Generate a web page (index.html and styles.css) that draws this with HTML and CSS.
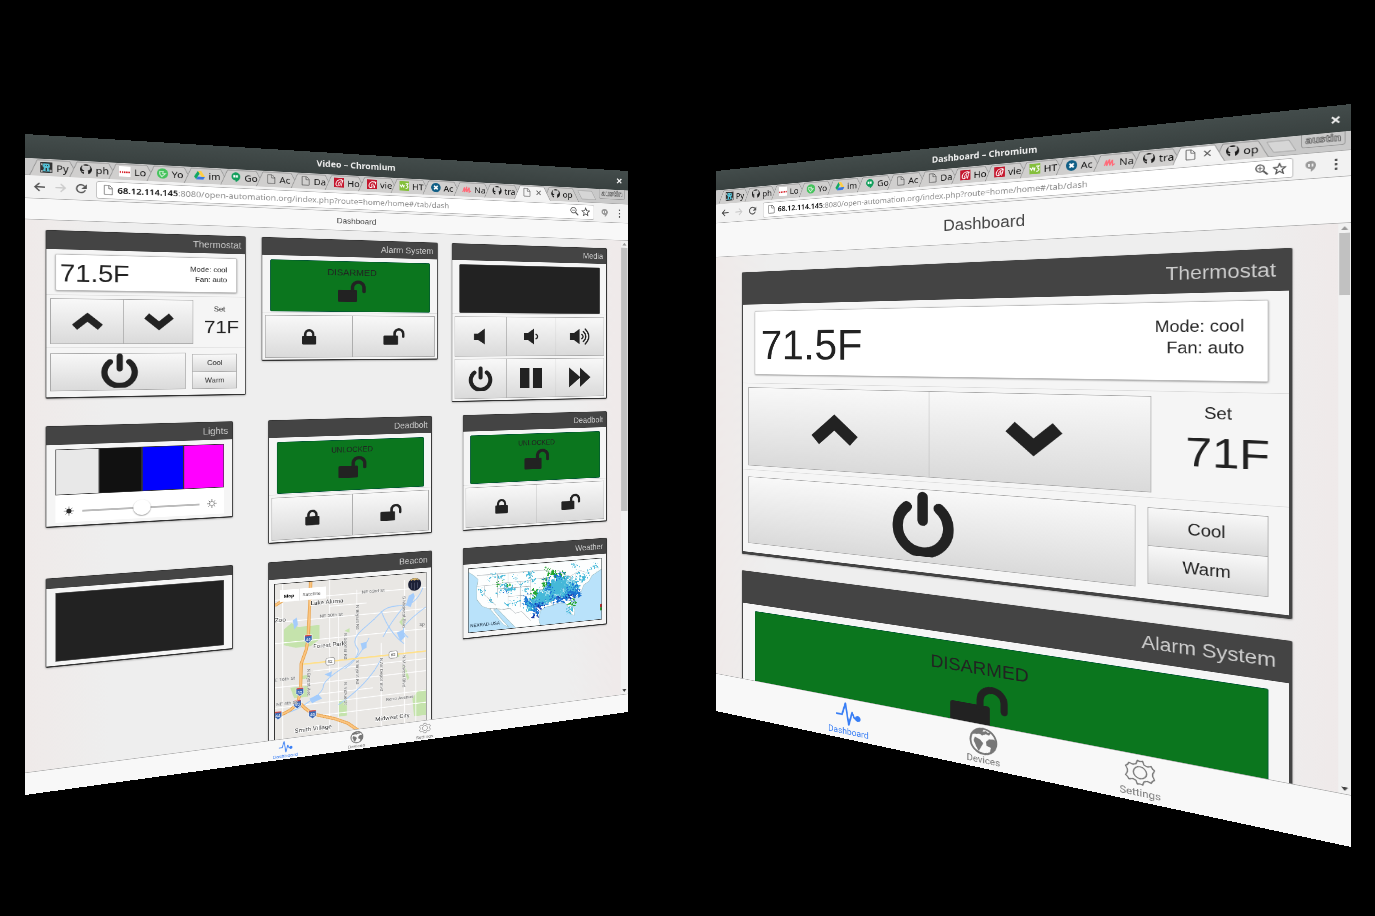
FILE: index.html
```html
<!DOCTYPE html>
<html lang="en">
<head>
<meta charset="utf-8">
<title>Open Automation</title>
<link rel="stylesheet" href="styles.css">
</head>
<body>
<svg class="defs" aria-hidden="true">
  <symbol id="up" viewBox="0 0 88 56"><path d="M9 46 44 15l35 31" fill="none" stroke="currentColor" stroke-width="21" stroke-linejoin="miter"/></symbol>
  <symbol id="down" viewBox="0 0 88 56"><path d="M9 10 44 41l35-31" fill="none" stroke="currentColor" stroke-width="21" stroke-linejoin="miter"/></symbol>
  <symbol id="power" viewBox="0 0 100 106"><path d="M24 27a41 41 0 1 0 52 0M50 10v38" fill="none" stroke="currentColor" stroke-width="17" stroke-linecap="round"/></symbol>
  <symbol id="lock" viewBox="0 0 46 54"><rect y="24" width="46" height="30" rx="3"/><path d="M10 28V18a13 13 0 0 1 26 0v10" fill="none" stroke="currentColor" stroke-width="8"/></symbol>
  <symbol id="unlock" viewBox="0 0 90 72"><rect y="32" width="62" height="40" rx="4"/><path d="M47 34V24a18 18 0 0 1 37 0v13" fill="none" stroke="currentColor" stroke-width="11" stroke-linecap="round"/></symbol>
  <symbol id="vol0" viewBox="0 0 50 60"><path d="M2 20h14L40 2v56L16 42H2z"/></symbol>
  <symbol id="vol1" viewBox="0 0 56 60"><path d="M2 18h14L38 2v56L16 42H2z"/><path d="M46 22q12 8 0 16" fill="none" stroke="currentColor" stroke-width="5" stroke-linecap="round"/></symbol>
  <symbol id="vol3" viewBox="0 0 78 60"><path d="M2 18h14L38 2v56L16 42H2z"/><path d="M46 22q10 8 0 16M52 12q19 18 0 36M59 3q27 27 0 54" fill="none" stroke="currentColor" stroke-width="5" stroke-linecap="round"/></symbol>
  <symbol id="pause" viewBox="0 0 84 72"><path d="M2 0h34v72H2zM48 0h34v72H48z"/></symbol>
  <symbol id="ffwd" viewBox="0 0 80 72"><path d="M2 2 40 34V2l38 34-38 34V38L2 70z"/></symbol>
  <symbol id="pulse" viewBox="0 0 44 44"><path d="M1 24h10L17 4l6 36 6-22 4 9h6" fill="none" stroke="currentColor" stroke-width="3" stroke-linejoin="round" stroke-linecap="round"/><circle cx="39" cy="27" r="5"/></symbol>
  <symbol id="earth" viewBox="0 0 44 44"><circle cx="22" cy="22" r="20" fill="none" stroke="currentColor" stroke-width="3"/><path d="M5 13 9 7l6-4 8-1-2 5 5-2 3 2 5-1-3 5-5-1-6 3-3-2-5 1zM9 17l8 3 5 5-3 6-4 8-4-7-4-9zM31 17l8-1 4 7-2 9-7 8-2-2 2-8-7-2-1-6z"/></symbol>
  <symbol id="gear" viewBox="-3 -3 50 50"><g fill="none" stroke="currentColor" stroke-width="2" stroke-linejoin="round"><circle cx="22" cy="22" r="10"/><path d="M18 2q4 2 8 0l2 6 5 2 6-2q1 4 5 6l-3 6v4l3 6q-4 2-5 6l-6-2-5 2-2 6q-4-2-8 0l-2-6-5-2-6 2q-1-4-5-6l3-6v-4l-3-6q4-2 5-6l6 2 5-2z"/></g></symbol>
  <symbol id="back" viewBox="0 0 16 16"><path d="M15 8H2M8 2 2 8l6 6" fill="none" stroke="currentColor" stroke-width="2"/></symbol>
  <symbol id="fwd" viewBox="0 0 16 16"><path d="M1 8h13M8 2l6 6-6 6" fill="none" stroke="currentColor" stroke-width="2"/></symbol>
  <symbol id="reload" viewBox="0 0 16 16"><path d="M13 10a6 6 0 1 1-1-6" fill="none" stroke="currentColor" stroke-width="2"/><path d="M15 1v7H8z"/></symbol>
  <symbol id="doc" viewBox="0 0 16 16"><path d="M3 1h7l4 4v10H3zM9 1v5h5" fill="none" stroke="#555"/></symbol>
  <symbol id="find" viewBox="0 0 16 16"><g fill="none" stroke="currentColor"><circle cx="6" cy="6" r="5" stroke-width="1.6"/><path d="m10 10 5 5" stroke-width="2.4"/><path d="M3 6h6"/></g></symbol>
  <symbol id="findplus" viewBox="0 0 16 16"><g fill="none" stroke="currentColor"><circle cx="6" cy="6" r="5" stroke-width="1.6"/><path d="m10 10 5 5" stroke-width="2.4"/><path d="M3 6h6M6 3v6"/></g></symbol>
  <symbol id="star" viewBox="0 0 16 16"><path d="m8 1 2 5 5 .3-4 3.400 1.300 5.300L8 12l-4.300 3L5 9.700 1 6.300 6 6z" fill="none" stroke="currentColor" stroke-width="1.500"/></symbol>
  <symbol id="hang" viewBox="0 0 16 16"><path d="M8 1a6 5.500 0 0 0 0 11v4q6-4 6-9a6 6 0 0 0-6-6z" fill="#999"/><path d="M5 5h2v4H5zM9 5h2v4H9z" fill="#eee"/></symbol>
  <symbol id="dots" viewBox="0 0 16 16"><path d="M7 1h3v3H7zM7 7h3v3H7zM7 13h3v3H7z"/></symbol>
  <symbol id="fpy" viewBox="0 0 16 16"><path fill="#333" d="M0 0h16v16H0z"/><path fill="#54c1d6" d="M4 2h8l1 5-2 2 2 5H3l2-5-2-3z"/><path fill="#333" d="M6 4h1v2H6zM9 4h1v2H9zM7 9h2v4H7z"/><path fill="#aaa" d="M1 12h2v3H1zM13 11h2v4h-2zM1 2h2v3H1z"/></symbol>
  <symbol id="fgh" viewBox="0 0 16 16"><path fill="#1b1b1b" d="M5 15v-3c-2 .5-3-.5-3.500-2 1 0 1.500 1.400 3.500 1 0-1 .3-1.300.6-1.600C2 9 1.600 4.600 3.100 3.300 2.700 2 3 1.200 3.200 1c1.200 0 2 .8 2.300 1h5c.4-.3 1.200-1 2.300-1 .2.300.5 1 .1 2.300 1.500 1.300 1.100 5.700-2.500 6.100.4.400.6 1 .6 2V15c3-1 5-4 5-7 0-4-3-8-8-8S0 4 0 8c0 3 2 6 5 7z"/><path fill="#c9c9c9" d="M4 4.500q4-1 8 0c1 3-.5 4-4 4s-5-1-4-4z"/></symbol>
  <symbol id="fcanon" viewBox="0 0 16 16"><path fill="#fff" d="M0 0h16v16H0z"/><path stroke="#d4141c" stroke-width="2.500" stroke-dasharray="2 1" d="M1 9h14"/></symbol>
  <symbol id="fgreen" viewBox="0 0 16 16"><circle cx="8" cy="8" r="8" fill="#45c35c"/><path fill="none" stroke="#cfeed4" stroke-width="1.500" d="M4 5h5l-1 3h4l-5 5-3-4z"/></symbol>
  <symbol id="fdrive" viewBox="0 0 16 16"><path fill="#ffcf44" d="M5.500 1h5l5.500 9h-5z"/><path fill="#11a861" d="m5.500 1 2.500 4.500L3 14 0 10z"/><path fill="#3777e3" d="M5.500 10H16l-2.500 4.500H3z"/></symbol>
  <symbol id="fhang" viewBox="0 0 16 16"><path d="M8 0a7 6.800 0 0 0 0 13.500V16q7-4 7-9.300A7 7 0 0 0 8 0z" fill="#119e5b"/><path d="M4.500 4.500h3v4h-3zM8.500 4.500h3v4h-3z" fill="#fff"/></symbol>
  <symbol id="fred" viewBox="0 0 16 16"><path fill="#c4162d" d="M0 0h16v16H0z"/><path fill="none" stroke="#fff" stroke-width="1.300" d="M13 3C7 2 3 6 3 11s8 2 7-2-4 0-3 3M9 6l5-2-3 10"/></symbol>
  <symbol id="fw3" viewBox="0 0 16 16"><path fill="#84bf3b" d="M0 0h16v16H0z"/><path fill="none" stroke="#fff" stroke-width="1.500" d="m1 6 2 4 2-4 2 4 1-4M10 4h4l-2 3q4 2 0 5h-2"/></symbol>
  <symbol id="fblue" viewBox="0 0 16 16"><circle cx="8" cy="8" r="8" fill="#0f5e85"/><path stroke="#fff" stroke-width="2.500" d="m5 5 6 6M11 5l-6 6"/></symbol>
  <symbol id="fpink" viewBox="0 0 16 16"><path fill="none" stroke="#ff6c7a" stroke-width="2" d="m1 13 3-8v8l4-9v9l4-8v8l3-2"/></symbol>
</svg>

<main class="stage">
  <section class="window window-left" aria-label="Video window">
    <div class="titlebar"><span>Video – Chromium</span><button class="close" aria-label="Close">×</button></div>
    <div class="tabs"></div>
    <div class="toolbar">
      <button aria-label="Back"><svg><use href="#back"/></svg></button>
      <button aria-label="Forward" class="off"><svg><use href="#fwd"/></svg></button>
      <button aria-label="Reload"><svg><use href="#reload"/></svg></button>
      <div class="url"><svg><use href="#doc"/></svg><p><b>68.12.114.145</b>:8080/open-automation.org/index.php?route=home/home#/tab/dash</p><svg><use href="#find"/></svg><svg><use href="#star"/></svg></div>
      <svg><use href="#hang"/></svg>
      <button aria-label="Menu"><svg><use href="#dots"/></svg></button>
    </div>
    <div class="page small">
      <h1>Dashboard</h1>
      <div class="view">
        <div class="content">
          <div class="row">
            <article class="card">
              <h2>Thermostat</h2>
              <div class="sect"><div class="display"><strong>71.5F</strong><p>Mode: cool<br>Fan: auto</p></div></div>
              <div class="sect set-row">
                <div class="keys"><button aria-label="Warmer"><svg class="chev"><use href="#up"/></svg></button><button aria-label="Cooler"><svg class="chev"><use href="#down"/></svg></button></div>
                <div class="set"><span>Set</span><strong>71F</strong></div>
              </div>
              <div class="sect power-row">
                <div class="keys"><button aria-label="Power"><svg class="pwr"><use href="#power"/></svg></button></div>
                <div class="modes"><button>Cool</button><button>Warm</button></div>
              </div>
            </article>
            <article class="card">
              <h2>Alarm System</h2>
              <div class="sect flat"><div class="state">DISARMED<svg><use href="#unlock"/></svg></div></div>
              <div class="keys tail"><button aria-label="Arm"><svg class="lk"><use href="#lock"/></svg></button><button aria-label="Disarm"><svg class="ulk"><use href="#unlock"/></svg></button></div>
            </article>
            <article class="card">
              <h2>Media</h2>
              <div class="sect flat"><div class="state dark"></div></div>
              <div class="keys tail"><button aria-label="Mute"><svg class="v0"><use href="#vol0"/></svg></button><button aria-label="Volume down"><svg class="v1"><use href="#vol1"/></svg></button><button aria-label="Volume up"><svg class="v3"><use href="#vol3"/></svg></button></div>
              <div class="keys tail"><button aria-label="Power"><svg class="mid"><use href="#power"/></svg></button><button aria-label="Pause"><svg class="med"><use href="#pause"/></svg></button><button aria-label="Forward"><svg class="med"><use href="#ffwd"/></svg></button></div>
            </article>
          </div>
          <div class="row wide">
            <article class="card">
              <h2>Lights</h2>
              <div class="lights">
                <div class="swatches"><button class="c1" aria-label="White"></button><button class="c2" aria-label="Black"></button><button class="c3" aria-label="Blue"></button><button class="c4" aria-label="Magenta"></button></div>
                <label class="dim"><svg viewBox="0 0 16 16"><circle cx="8" cy="8" r="3.500"/><path d="M8 1v14M1 8h14M3 3l10 10M13 3 3 13" stroke="#333" stroke-width=".6"/></svg><input type="range" aria-label="Brightness"><svg viewBox="0 0 16 16"><path d="M8 1v14M1 8h14M3 3l10 10M13 3 3 13" stroke="#777"/><circle cx="8" cy="8" r="3.500" fill="#fff" stroke="#777"/></svg></label>
              </div>
            </article>
            <article class="card">
              <h2>Deadbolt</h2>
              <div class="sect flat"><div class="state lesser">UNLOCKED<svg><use href="#unlock"/></svg></div></div>
              <div class="keys tail"><button aria-label="Lock"><svg class="lk"><use href="#lock"/></svg></button><button aria-label="Unlock"><svg class="ulk"><use href="#unlock"/></svg></button></div>
            </article>
            <article class="card">
              <h2>Deadbolt</h2>
              <div class="sect flat"><div class="state lesser">UNLOCKED<svg><use href="#unlock"/></svg></div></div>
              <div class="keys tail"><button aria-label="Lock"><svg class="lk"><use href="#lock"/></svg></button><button aria-label="Unlock"><svg class="ulk"><use href="#unlock"/></svg></button></div>
            </article>
          </div>
          <div class="row wide">
            <article class="card"><h2 class="blank"></h2><div class="blackbox"></div></article>
            <article class="card">
              <h2>Beacon</h2>
              <div class="map">
                <svg viewBox="0 0 245 290" class="citymap">
                  <rect width="245" height="290" fill="#e9e7e4"/>
                  <path fill="#c5e3ac" d="M14 76l12-10 10 8h34v24l-14 10H32l-18-6zM24 174h28v18H30zM101 204h13v28h-13zM222 216l10-12h13v44h-20zM42 156h10v6H42zM200 82l7-8 4 10-5 6zM195 136h5v6h-5zM205 158h4l8 22-3 4zM110 88l8-4v8z"/>
                  <g stroke="#fff" stroke-width="1.500" fill="none"><path d="M12 0v290M86 0v290M100 60v230M130 20v270M170 115v175M209 10v280M228 40v250M0 26h245M0 63h245M0 98h245M0 171h245M0 205h245M52 226h193M60 150h185M86 44h60M66 190h90"/></g>
                  <path fill="none" stroke="#a4ccfb" stroke-width="1.500" d="M240 26q-12 30-36 28t-34 8-30 26-10 30-22 32-32 28-28 26-48 10M209 55q-22 24-36 50M245 60q-30 20-36 30t6 20M110 152q20-10 40-48M100 212q50-30 70-70M170 60q14 40 38 60"/>
                  <path fill="#a4ccfb" d="M211 54l5-16 8-4 2 6-7 18zM136 112l10-2v10l-7 4zM28 62l6-4 2 12-6 8zM54 196l14-6 6 8-16 6zM78 158l12-4-2 10zM196 100l10-4 4 12-8 8z"/>
                  <path fill="none" stroke="#ffe08a" stroke-width="2.500" d="M44 137h201"/>
                  <g fill="none" stroke-linejoin="round"><path stroke="#e59c42" stroke-width="5" d="M56 0 52 95l-3 18-8 23-1 46-4 16 11 13 12 11 36 13 20 10 24 20M36 198q-10 18-36 20M0 35q26-18 56-14"/><path stroke="#fbc580" stroke-width="3" d="M56 0 52 95l-3 18-8 23-1 46-4 16 11 13 12 11 36 13 20 10 24 20M36 198q-10 18-36 20M0 35q26-18 56-14"/></g>
                  <g fill="#3b68b5" stroke="#fff"><path d="M46 89h12v9l-6 5-6-5zM33 176h12v9l-6 5-6-5zM29 196h12v9l-6 5-6-5zM0 211h11v9l-6 5-5-5zM53 216h12v9l-6 5-6-5z"/></g>
                  <path stroke="#d64b43" stroke-width="2" d="M47 90h10M34 177h10M30 197h10M0 212h10M54 217h10"/>
                  <g fill="#fff" stroke="#888"><rect x="80" y="131" width="14" height="12" rx="3"/><rect x="183" y="131" width="14" height="12" rx="3"/></g>
                  <g class="tiny" fill="#333"><text x="83" y="140">62</text><text x="186" y="140">62</text></g>
                  <g class="tiny" fill="#fff"><text x="48" y="99">44</text><text x="35" y="186">35</text><text x="31" y="206">40</text><text x="1" y="221">44</text><text x="55" y="226">40</text></g>
                  <g class="town"><text x="56" y="39">Lake Aluma</text><text x="0" y="63">Zoo</text><text x="60" y="112">Forest Park</text><text x="160" y="248">Midwest City</text><text x="31" y="250">Smith Village</text></g>
                  <g class="street"><text x="138" y="27">NE 63rd St</text><text x="70" y="62">NE 50th St</text><text x="0" y="161">E 16th St</text><text x="2" y="201">NE 4th St</text><text x="178" y="216">Reno Avenue</text><text x="234" y="92">Sp</text>
                    <text transform="translate(129 46) rotate(90)">N Bryant Rd</text><text transform="translate(109 92) rotate(90)">N Sooner Rd</text><text transform="translate(206 38) rotate(90)">S Midwest Blvd</text><text transform="translate(129 140) rotate(90)">S Bryant Rd</text><text transform="translate(168 140) rotate(90)">N Air Depot Blvd</text><text transform="translate(206 140) rotate(90)">N Midwest Blvd</text><text transform="translate(51 145) rotate(90)">N Bryant Ave</text><text transform="translate(109 175) rotate(90)">N Vickie Dr</text></g>
                  <rect x="8" y="10" width="72" height="20" fill="#fff"/><path d="M38 10v20" stroke="#ddd"/>
                  <text x="14" y="23" class="maptype b">Map</text><text x="43" y="23" class="maptype">Satellite</text>
                  <circle cx="226" cy="19" r="11" fill="#1b2035"/><path fill="#d9b66a" d="M219 11q7-6 14 0l-1 2-3-2-3 2-3-2-3 2z"/><path stroke="#6d7288" d="M221 16v10M226 16v13M231 16v10"/>
                </svg>
              </div>
            </article>
            <article class="card short">
              <h2>Weather</h2>
              <div class="map">
                <svg viewBox="0 0 244 112" class="usmap">
                  <filter id="rough" x="-10%" y="-10%" width="120%" height="120%" color-interpolation-filters="sRGB"><feTurbulence type="fractalNoise" baseFrequency=".22" numOctaves="2" seed="8"/><feDisplacementMap in="SourceGraphic" scale="26" xChannelSelector="R" yChannelSelector="G"/></filter>
                  <rect width="244" height="112" fill="#b9e2fa"/>
                  <path fill="#fdfefe" stroke="#8aa" stroke-width=".6" d="M0 0h244v20l-18 10-6 10-10 6-5 12-14 12-4 8 6 12-1 10-5-2-6-14-6-8-14-1-8 3-14 2-10 6-3 16 3 10H84L66 92 50 74l-6 2 16 20 12 14-10-6-18-22-6-8-14-6-9-12-1-20 3-16-8-8-9-6z"/>
                  <path fill="none" stroke="#8b9499" stroke-width=".6" d="M15 13h122l10 5 16-2 8 8 14 4 18-9 10 4M37 73l26 4 10-1 10 10 12-2 16 18M15 32h36M51 13v42M51 40h60M28 32v16l20 20M70 13v62M70 55h50M92 30v46M51 30h60M111 13v56M111 28h24M111 48h30M120 70h22M135 25v50M150 40v35M160 44v30M171 48v25M120 58h66M150 48h50M185 28v20M195 25v20"/>
                  <g filter="url(#rough)">
                    <g fill="#45b8d8"><ellipse cx="170" cy="48" rx="30" ry="20"/><ellipse cx="138" cy="60" rx="22" ry="12"/><ellipse cx="112" cy="74" rx="12" ry="10"/><circle cx="64" cy="36" r="4"/><circle cx="76" cy="42" r="5"/><circle cx="56" cy="46" r="3"/><circle cx="44" cy="16" r="3"/><circle cx="58" cy="18" r="3"/><circle cx="84" cy="22" r="2"/><circle cx="84" cy="66" r="4"/><circle cx="72" cy="68" r="3"/><circle cx="40" cy="60" r="3"/><circle cx="108" cy="18" r="4"/><circle cx="114" cy="28" r="4"/><circle cx="104" cy="44" r="4"/><circle cx="208" cy="34" r="6"/><circle cx="218" cy="24" r="3"/><circle cx="232" cy="14" r="4"/><circle cx="198" cy="22" r="3"/><circle cx="183" cy="90" r="5"/><circle cx="24" cy="42" r="3"/><circle cx="34" cy="24" r="2"/><circle cx="96" cy="34" r="3"/><circle cx="192" cy="8" r="3"/></g>
                    <g fill="#a9e0ee"><ellipse cx="182" cy="38" rx="8" ry="4"/><ellipse cx="140" cy="54" rx="7" ry="3"/><ellipse cx="160" cy="62" rx="7" ry="3"/><circle cx="174" cy="54" r="4"/></g>
                    <g fill="#1b74d4"><ellipse cx="126" cy="75" rx="14" ry="5"/><ellipse cx="120" cy="88" rx="5" ry="9"/><ellipse cx="166" cy="68" rx="20" ry="5"/><ellipse cx="192" cy="60" rx="12" ry="7"/><ellipse cx="142" cy="38" rx="5" ry="13"/><ellipse cx="162" cy="26" rx="10" ry="5"/><ellipse cx="104" cy="66" rx="4" ry="9"/><circle cx="66" cy="44" r="3"/><circle cx="192" cy="46" r="4"/><circle cx="178" cy="52" r="3"/><circle cx="150" cy="52" r="3"/></g>
                    <g fill="#17309f"><ellipse cx="128" cy="78" rx="7" ry="3"/><ellipse cx="186" cy="65" rx="8" ry="3"/><circle cx="119" cy="93" r="3"/><circle cx="164" cy="66" r="3"/></g>
                    <g fill="#21a52b"><ellipse cx="152" cy="21" rx="8" ry="5"/><ellipse cx="138" cy="38" rx="4" ry="7"/><ellipse cx="120" cy="54" rx="3" ry="8"/><circle cx="52" cy="30" r="3"/><circle cx="70" cy="34" r="3"/><circle cx="190" cy="77" r="5"/><circle cx="170" cy="24" r="3"/><circle cx="142" cy="10" r="3"/></g>
                  </g>
                  <path fill="#c02b2b" d="M241 84h3v6h-3z"/><path fill="#2a9b30" d="M241 90h3v6h-3z"/>
                  <text x="3" y="103" class="stamp">NEXRAD-USA</text>
                </svg>
              </div>
            </article>
          </div>
        </div>
        <div class="scroll"><i></i><span></span><i class="dn"></i></div>
      </div>
      <nav><a href="#dash" class="on"><svg><use href="#pulse"/></svg>Dashboard</a><a href="#devices"><svg><use href="#earth"/></svg>Devices</a><a href="#settings"><svg><use href="#gear"/></svg>Settings</a></nav>
    </div>
  </section>

  <section class="window window-right" aria-label="Dashboard window">
    <div class="titlebar"><span>Dashboard – Chromium</span><button class="close" aria-label="Close">×</button></div>
    <div class="tabs"></div>
    <div class="toolbar">
      <button aria-label="Back"><svg><use href="#back"/></svg></button>
      <button aria-label="Forward" class="off"><svg><use href="#fwd"/></svg></button>
      <button aria-label="Reload"><svg><use href="#reload"/></svg></button>
      <div class="url"><svg><use href="#doc"/></svg><p><b>68.12.114.145</b>:8080/open-automation.org/index.php?route=home/home#/tab/dash</p><svg><use href="#findplus"/></svg><svg><use href="#star"/></svg></div>
      <svg><use href="#hang"/></svg>
      <button aria-label="Menu"><svg><use href="#dots"/></svg></button>
    </div>
    <div class="page large">
      <h1>Dashboard</h1>
      <div class="view">
        <div class="content">
          <article class="card">
            <h2>Thermostat</h2>
            <div class="sect"><div class="display"><strong>71.5F</strong><p>Mode: cool<br>Fan: auto</p></div></div>
            <div class="sect set-row">
              <div class="keys"><button aria-label="Warmer"><svg class="chev"><use href="#up"/></svg></button><button aria-label="Cooler"><svg class="chev"><use href="#down"/></svg></button></div>
              <div class="set"><span>Set</span><strong>71F</strong></div>
            </div>
            <div class="sect power-row">
              <div class="keys"><button aria-label="Power"><svg class="pwr"><use href="#power"/></svg></button></div>
              <div class="modes"><button>Cool</button><button>Warm</button></div>
            </div>
          </article>
          <article class="card">
            <h2>Alarm System</h2>
            <div class="sect flat"><div class="state">DISARMED<svg><use href="#unlock"/></svg></div></div>
          </article>
        </div>
        <div class="scroll"><i></i><span></span><i class="dn"></i></div>
      </div>
      <nav><a href="#dash" class="on"><svg><use href="#pulse"/></svg>Dashboard</a><a href="#devices"><svg><use href="#earth"/></svg>Devices</a><a href="#settings"><svg><use href="#gear"/></svg>Settings</a></nav>
    </div>
  </section>
</main>
<script src="tabs.js"></script>
</body>
</html>
```

FILE: styles.css
```css
* { box-sizing: border-box; margin: 0; padding: 0; }
body { background: #000; font-family: "Liberation Sans", Arial, sans-serif; color: #222; }
button { font: inherit; color: inherit; border: 0; background: none; }
svg { display: block; fill: currentColor; }
.defs { position: absolute; width: 0; height: 0; }
.stage { position: relative; min-height: 100vh; overflow: hidden; }

/* Each browser window is a flat plane turned away from the viewer. */
.window { position: absolute; left: 0; top: 0; width: 960px; height: 1000px; display: flex; flex-direction: column; overflow: hidden; background: #f2f2f2; transform-origin: 0 0; }
.window-left { transform: matrix3d(.773226, .078052, 0, .000231053, 0, .661, 0, 0, 0, 0, 1, 0, 25, 134, 0, 1); }
.window-right { transform: matrix3d(.276962, -.0993901, 0, -.000284601, 0, .54, 0, 0, 0, 0, 1, 0, 716, 171, 0, 1); }

.titlebar { height: 36px; flex: none; display: grid; grid-template-columns: 34px 1fr 34px; align-items: center; background: linear-gradient(#434c4b, #394140); color: #eee; font: bold 14px "Noto Sans", sans-serif; text-align: center; }
.titlebar span { grid-column: 2; }
.close { font: bold 22px/22px "Noto Sans", sans-serif; }

.tabs { height: 26px; flex: none; display: flex; padding-left: 5px; background: #c9c9c9; border-bottom: 1px solid #aaa; }
.tab { width: 67px; margin-right: -14px; height: 26px; flex: none; display: grid; grid-template: 26px / 15px 17px 4px 21px 10px; align-items: center; font: 15px "Noto Sans", sans-serif; color: #111; }
.tab > * { grid-row: 1; }
.tab .edge { grid-column: 1 / -1; width: 67px; height: 26px; fill: #d0cfce; stroke: #8c8c8c; }
.tab .fav { grid-column: 2; width: 16px; height: 16px; z-index: 1; }
.tab b { grid-column: 4; font-weight: 400; overflow: hidden; white-space: nowrap; z-index: 1; }
.tab.active { z-index: 2; }
.tab.active b { font-size: 20px; line-height: 20px; color: #555; padding-left: 3px; }
.tab.active .edge { fill: #f4f4f4; }
.plus { width: 42px; height: 26px; margin-left: 7px; fill: #d6d6d6; stroke: #a3a3a3; }
.user { margin: 0 6px 0 auto; width: 50px; height: 18px; font: bold 13px/14px "Noto Sans", sans-serif; color: #ddd; -webkit-text-stroke: 1px #666; border: 1px solid #999; border-top: 0; border-radius: 0 0 4px 4px; text-align: center; }

.toolbar { height: 35px; flex: none; display: flex; align-items: center; padding: 0 9px 0 11px; gap: 12px; border-bottom: 1px solid #b0b0b0; color: #555; }
.toolbar svg { width: 16px; height: 16px; flex: none; }
.toolbar .off { color: #ccc; }
.url { flex: 1; height: 27px; display: flex; align-items: center; gap: 5px; padding: 0 7px; background: #fff; border: 1px solid #b5b5b5; border-radius: 3px; }
.url p { flex: 1; font: 13px "Noto Sans", sans-serif; color: #8a8a8a; white-space: nowrap; }
.url p b { color: #111; font-weight: 600; }

.page { flex: 1; min-height: 0; display: flex; flex-direction: column; }
.page h1 { flex: none; display: flex; align-items: center; justify-content: center; font-weight: 400; background: #f8f8f8; border-bottom: 1px solid #b2b2b2; color: #444; }
.view { flex: 1; min-height: 0; display: flex; overflow: hidden; background: linear-gradient(90deg, #efeae9, #eee 12%, #eee 88%, #efe9e9); }
.content { flex: 1; min-width: 0; display: flex; flex-direction: column; }
.scroll { width: 14px; display: flex; flex-direction: column; background: #f1f1f1; align-items: center; }
.scroll span { width: 12px; background: #c1c1c1; }
.scroll i { margin: 4px 0; border: 4px solid transparent; border-top: 0; border-bottom: 5px solid #999; }
.scroll .dn { margin-top: auto; border: 4px solid transparent; border-bottom: 0; border-top: 5px solid #444; }

.card { flex: none; background: #f5f5f5; border: 1px solid #333; border-radius: 2px; box-shadow: 0 1px 3px rgba(0, 0, 0, .3); }
.card h2 { height: var(--head); display: flex; align-items: center; justify-content: flex-end; padding-right: var(--gap); background: #444; color: #ccc; font-weight: 400; font-size: var(--cap); }
.sect { padding: var(--top) var(--side) var(--gap); border-bottom: 1px solid #dcdcdc; }
.display { height: var(--disp); display: flex; justify-content: space-between; align-items: center; padding: var(--drop) var(--modep) 0 var(--key); background: #fff; border: 1px solid #bbb; border-radius: 2px; box-shadow: 0 1px 3px rgba(0, 0, 0, .4); }
.display strong { font-weight: 400; font-size: var(--temp); }
.display p { align-self: flex-start; margin-top: var(--modet); font-size: var(--text); line-height: var(--line); text-align: right; }
.keys { display: flex; height: var(--keyh); }
.keys button { flex: 1; display: flex; align-items: center; justify-content: center; border: 1px solid #a9a9a9; background: linear-gradient(#f8f8f8, #dadada); }
.keys button + button { margin-left: -1px; }
.chev { width: var(--chev); height: var(--chevh); }
.pwr { width: var(--pwr); height: var(--pwr); }
.set-row { display: grid; grid-template-columns: 1fr var(--setw); padding: var(--kt) 0 var(--kt) var(--key); }
.set { display: flex; flex-direction: column; align-items: center; gap: var(--kt); padding-top: var(--sett); font-size: var(--text); }
.set strong { font-weight: 400; font-size: var(--setf); line-height: 1.2; padding-left: var(--setp); }
.power-row { display: grid; grid-template-columns: 1fr var(--modew); gap: var(--mgap); padding: var(--mt) var(--side) var(--mb) var(--key); border: 0; }
.power-row .keys { height: var(--pwrh); }
.power-row .keys button { padding-bottom: var(--kt); }
.modes { height: var(--modeh); margin-top: 2px; display: flex; flex-direction: column; }
.modes button { flex: 1; border: 1px solid #aaa; font-size: var(--text); background: linear-gradient(#f8f8f8, #dadada); }
.modes button + button { margin-top: -1px; }
.state { height: var(--stateh); padding-top: var(--statep); display: flex; flex-direction: column; align-items: center; background: #0b761e; font-size: var(--title); line-height: var(--statel); border: 1px solid #053; border-radius: 2px; }
.state svg { width: var(--ulk); height: var(--ulkh); margin-top: var(--svgt); }
.state.dark, .blackbox { background: #222; border: 1px solid #555; }

.small { --head: 28px; --title: 15px; --cap: 14px; --gap: 6px; --top: 7px; --side: 12px; --disp: 56px; --drop: 4px; --modep: 14px; --modet: 6px; --key: 5px; --temp: 37px; --text: 11px; --line: 16px; --keyh: 70px; --chev: 44px; --chevh: 28px; --pwr: 54px; --setw: 76px; --sett: 8px; --setp: 6px; --kt: 5px; --svgt: 3px; --setf: 30px; --modew: 66px; --mgap: 9px; --mt: 8px; --mb: 9px; --pwrh: 58px; --modeh: 56px; --stateh: 85px; --statep: 8px; --statel: 20px; --ulk: 45px; --ulkh: 36px; }
.small h1 { height: 32px; font-size: 13px; }
.small .content { padding: 15px 27px 0; }
.small .card { border-bottom-width: 2px; }
.small .flat { padding-bottom: 1px; }
.row { display: grid; grid-template-columns: repeat(3, 1fr); gap: 24px; align-items: start; margin-bottom: 23px; }
.row.wide { gap: 53px; margin-bottom: 30px; }
.tail { padding: 0; margin: 4px 4px 0; }
.tail:last-child { margin-bottom: 3px; }
.small .scroll span { height: 486px; flex: none; }
.lk { width: 22px; height: 27px; }
.ulk { width: 36px; height: 28px; }
.v0, .v1 { width: 28px; height: 30px; }
.v3 { width: 40px; height: 30px; }
.med { width: 42px; height: 38px; }
.mid { width: 42px; height: 44px; }
.state.lesser { font-size: 12px; line-height: 16px; }
.lights { padding: 7px 12px 5px; }
.swatches { display: flex; height: 70px; }
.swatches button { flex: 1; border: 1px solid #333; }
.c1 { background: #e8e8e8; }
.c2 { background: #111; }
.c3 { background: #00f; }
.c4 { background: #f0f; }
.dim { height: 42px; padding: 8px 10px 0; display: flex; align-items: center; gap: 10px; background: #fff; }
.dim svg { width: 16px; height: 16px; flex: none; }
.dim input { flex: 1; min-width: 0; height: 26px; appearance: none; background: linear-gradient(#bbb, #bbb) center / 100% 3px no-repeat; }
.dim input::-webkit-slider-thumb { appearance: none; width: 24px; height: 24px; border-radius: 50%; background: #fff; box-shadow: 0 1px 2px rgba(0, 0, 0, .5); }
.card h2.blank { height: 15px; }
.blackbox { height: 105px; margin: 7px 12px 6px; }
.map { margin: 7px 8px 8px; border: 1px solid #333; }
.map svg { width: 100%; height: auto; }
.town { font: 10px Roboto, sans-serif; fill: #333; stroke: #fff; stroke-width: 2px; paint-order: stroke; }
.street { font: 8px Roboto, sans-serif; fill: #777; stroke: #eee; stroke-width: 1px; paint-order: stroke; }
.tiny { font: 7px Roboto, sans-serif; }
.maptype { font: 8px Roboto, sans-serif; fill: #666; }
.maptype.b { font-weight: 700; fill: #000; }
.stamp { font: 8px "Liberation Sans", sans-serif; fill: #123; }

.large { --head: 57px; --title: 29px; --cap: 27px; --gap: 15px; --top: 12px; --side: 24px; --disp: 115px; --drop: 8px; --modep: 28px; --modet: 12px; --key: 11px; --temp: 74px; --text: 23px; --line: 31px; --keyh: 142px; --chev: 88px; --chevh: 56px; --pwr: 108px; --setw: 170px; --sett: 10px; --setp: 22px; --kt: 7px; --svgt: 7px; --setf: 60px; --modew: 151px; --mgap: 16px; --mt: 12px; --mb: 16px; --pwrh: 121px; --modeh: 113px; --stateh: 170px; --statep: 16px; --statel: 40px; --ulk: 90px; --ulkh: 72px; }
.large h1 { height: 63px; font-size: 26px; }
.large .content { padding: 30px 52px 0 53px; gap: 30px; }
.large .card { border: 2px solid #444; border-right-width: 4px; border-bottom-width: 5px; }
.large .scroll span { height: 84px; flex: none; }

nav { flex: none; display: flex; justify-content: center; background: #f8f8f8; border-top: 1px solid #b2b2b2; font-family: Roboto, sans-serif; }
nav a { display: flex; flex-direction: column; align-items: center; color: #777; text-decoration: none; }
nav a.on { color: #387ef5; }
.small nav { height: 34px; font-size: 8px; line-height: 9px; }
.small nav a { width: 112px; padding-top: 2px; }
.small nav svg { width: 21px; height: 21px; }
.large nav { height: 70px; font-size: 15px; line-height: 16px; }
.large nav a { width: 225px; padding-top: 4px; }
.large nav svg { width: 44px; height: 44px; }
```

FILE: tabs.js
```js
const tabs = [
  ["fpy", "Py"], ["fgh", "ph"], ["fcanon", "Lo"], ["fgreen", "Yo"], ["fdrive", "im"],
  ["fhang", "Go"], ["doc", "Ac"], ["doc", "Da"], ["fred", "Ho"], ["fred", "vie"],
  ["fw3", "HT"], ["fblue", "Ac"], ["fpink", "Na"], ["fgh", "tra"], ["doc", "×", true], ["fgh", "op"]
];
document.querySelectorAll(".tabs").forEach(strip => {
  strip.innerHTML = tabs.map(([icon, label, active]) =>
    `<div class="tab${active ? " active" : ""}"><svg class="edge"><path d="M1 26 11 2H54L66 26"/></svg>` +
    `<svg class="fav"><use href="#${icon}"/></svg><b>${label}</b></div>`).join("") +
    `<svg class="plus"><path d="M4 5h26l8 15H12z"/></svg><span class="user">austin</span>`;
});
```
